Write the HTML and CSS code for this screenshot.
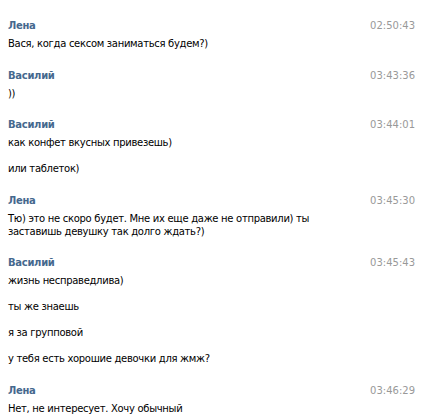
FILE: index.html
```html
<!DOCTYPE html>
<html lang="ru">
<head>
<meta charset="utf-8">
<link rel="stylesheet" href="styles.css">
</head>
<body>
<div class="chat">
  <div class="group">
    <div class="head"><span class="name">Лена</span><span class="time">02:50:43</span></div>
    <div class="msg">Вася, когда сексом заниматься будем?)</div>
  </div>
  <div class="group">
    <div class="head"><span class="name">Василий</span><span class="time">03:43:36</span></div>
    <div class="msg">))</div>
  </div>
  <div class="group">
    <div class="head"><span class="name">Василий</span><span class="time">03:44:01</span></div>
    <div class="msg">как конфет вкусных привезешь)</div>
    <div class="msg">или таблеток)</div>
  </div>
  <div class="group">
    <div class="head"><span class="name">Лена</span><span class="time">03:45:30</span></div>
    <div class="msg">Тю) это не скоро будет. Мне их еще даже не отправили) ты<br>заставишь девушку так долго ждать?)</div>
  </div>
  <div class="group">
    <div class="head"><span class="name">Василий</span><span class="time">03:45:43</span></div>
    <div class="msg">жизнь несправедлива)</div>
    <div class="msg">ты же знаешь</div>
    <div class="msg">я за групповой</div>
    <div class="msg">у тебя есть хорошие девочки для жмж?</div>
  </div>
  <div class="group">
    <div class="head"><span class="name">Лена</span><span class="time">03:46:29</span></div>
    <div class="msg">Нет, не интересует. Хочу обычный</div>
  </div>
</div>
</body>
</html>
```
FILE: styles.css
```css
html, body {
  margin: 0;
  padding: 0;
  background: #fff;
}
.chat {
  padding: 19px 11px 0 8px;
  font-family: "DejaVu Sans", Verdana, sans-serif;
  font-size: 10px;
  line-height: 13px;
  color: #000;
}
.group {
  margin-bottom: 18.5px;
}
.head {
  display: flex;
  justify-content: space-between;
  align-items: baseline;
  height: 13px;
}
.name {
  font-weight: bold;
  color: #45688e;
  letter-spacing: -0.3px;
}
.time {
  color: #999;
}
.msg {
  margin-top: 13px;
  letter-spacing: -0.3px;
}
.head + .msg {
  margin-top: 5px;
}
```
